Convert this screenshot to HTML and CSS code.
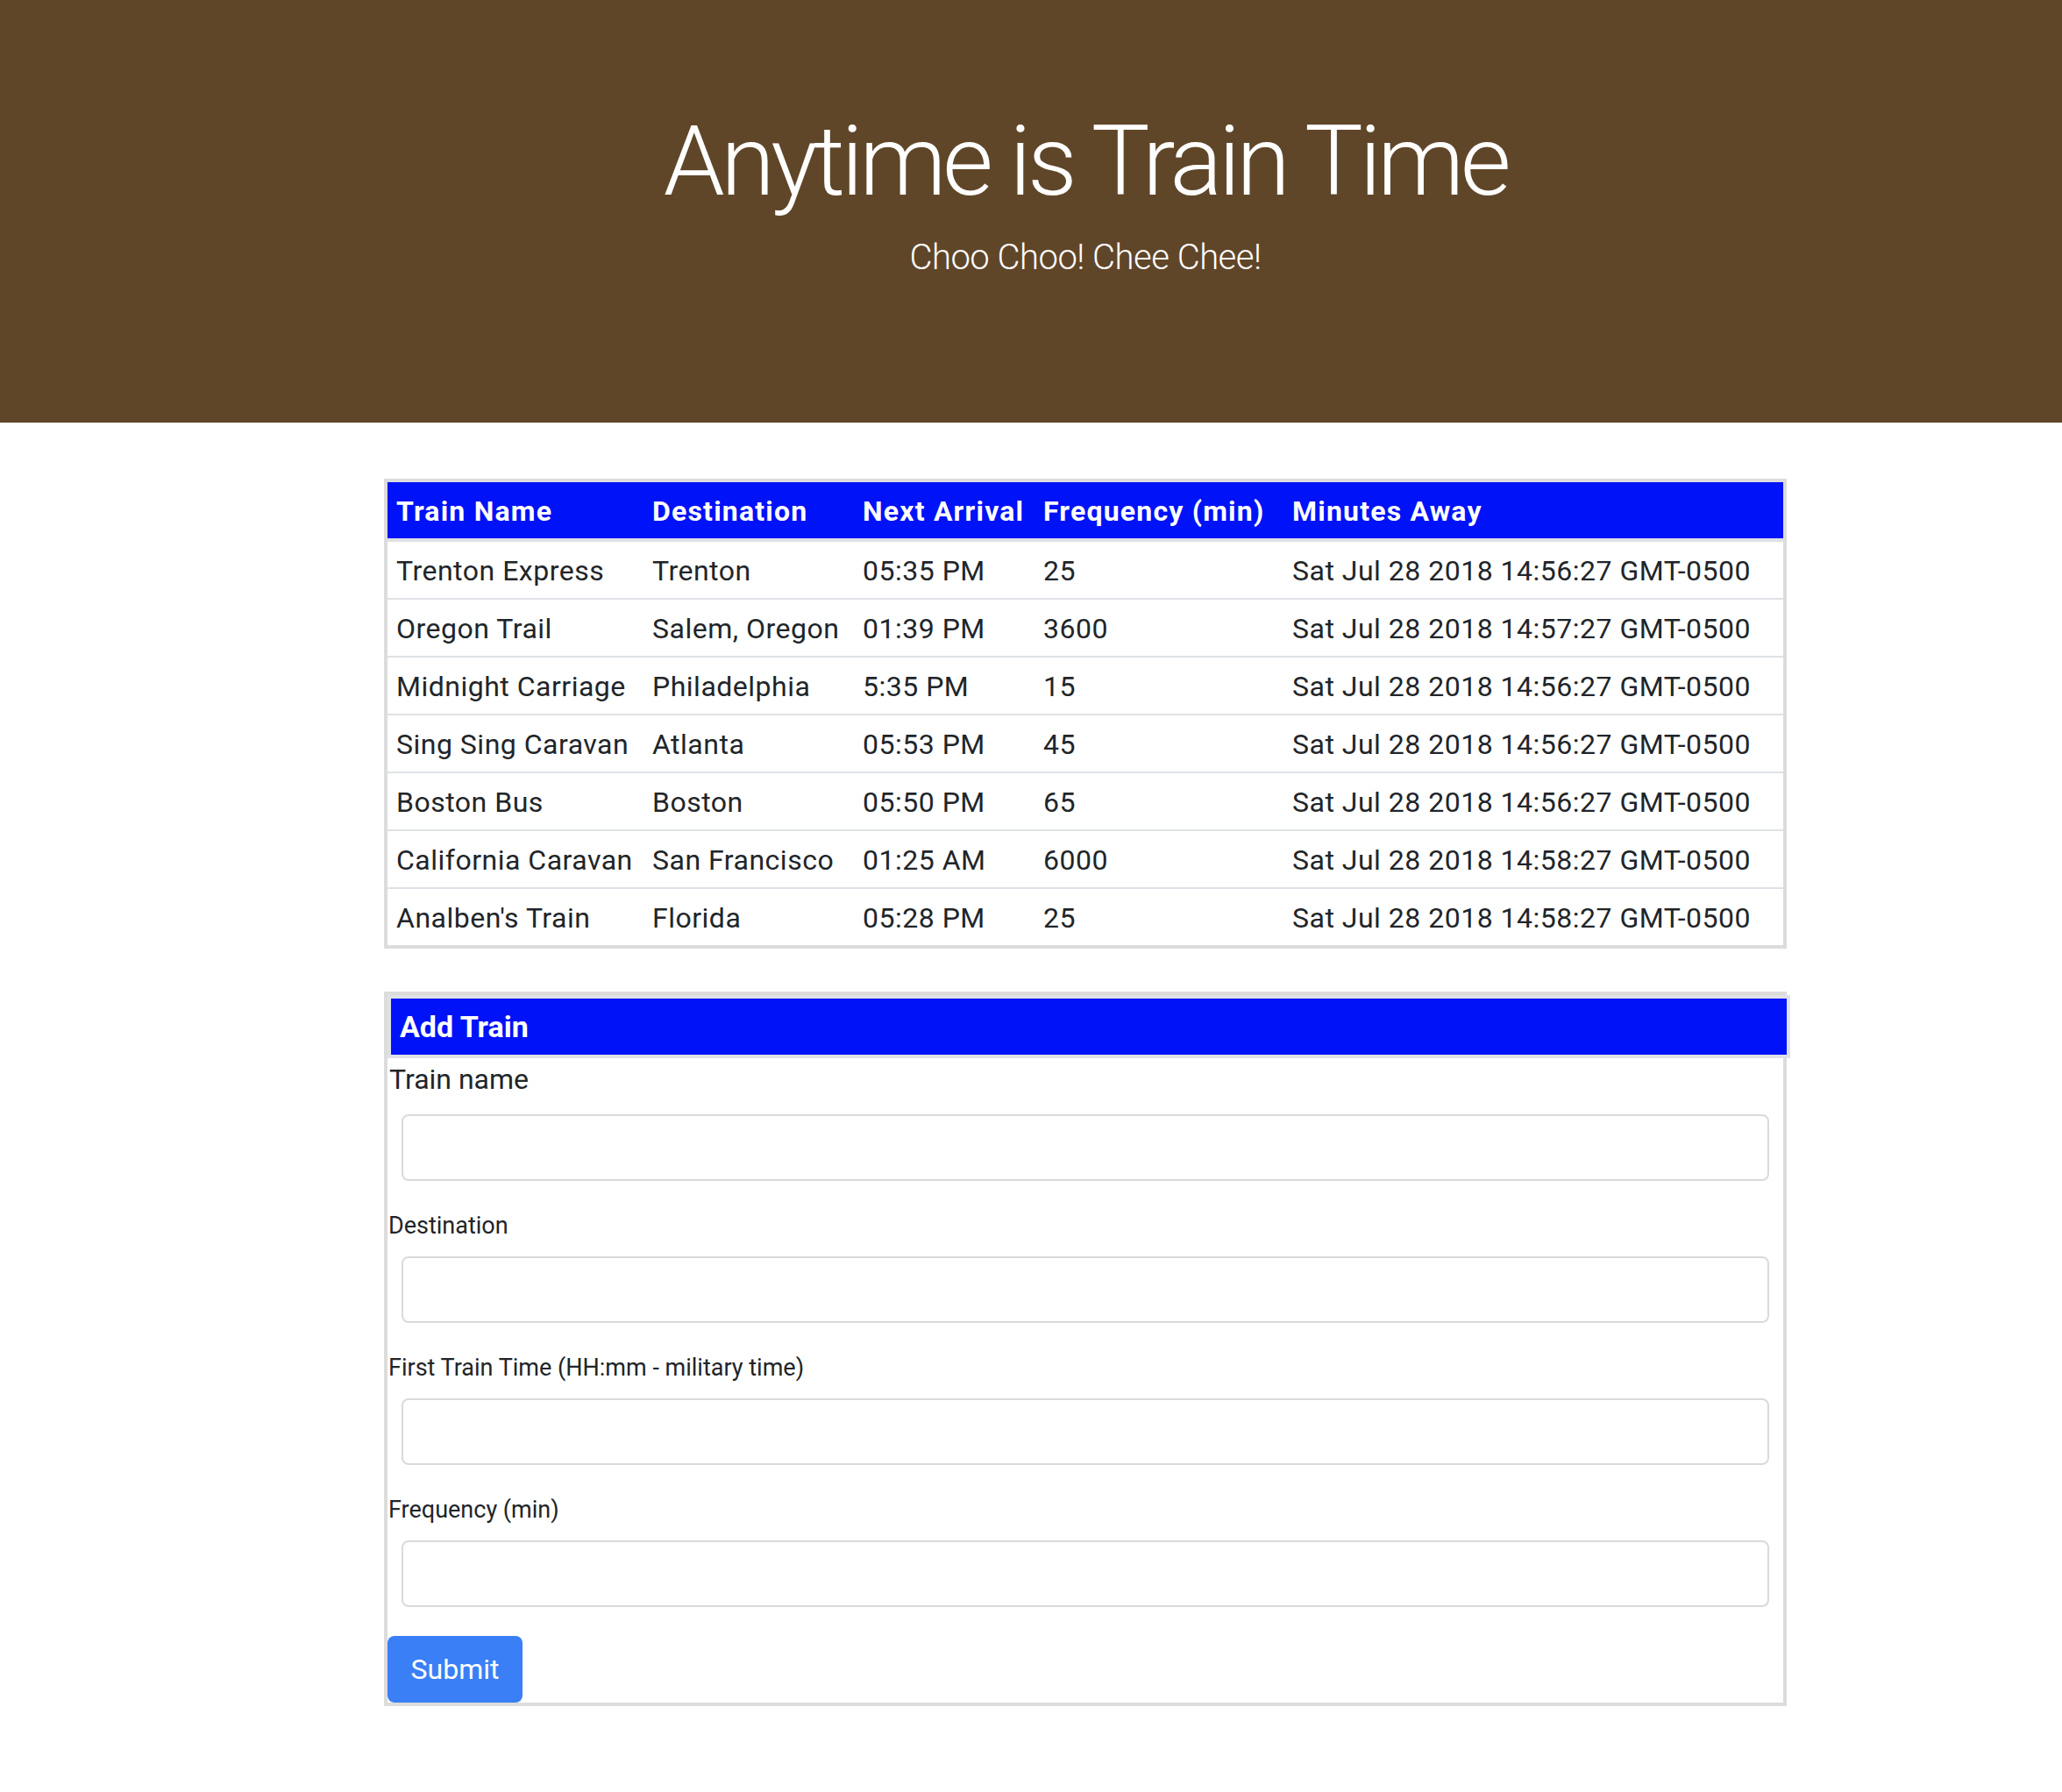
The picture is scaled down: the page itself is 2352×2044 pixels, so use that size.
FILE: index.html
```html
<!DOCTYPE html>
<html lang="en">
<head>
<meta charset="utf-8">
<title>Anytime is Train Time</title>
<link rel="stylesheet" href="styles.css">
</head>
<body>
<header class="hero">
  <h1 class="hero-title">Anytime is Train Time</h1>
  <p class="hero-lead">Choo Choo! Chee Chee!</p>
</header>
<main class="main">
  <div class="content">
    <div class="table-box">
      <table class="trains">
        <colgroup>
          <col class="c1"><col class="c2"><col class="c3"><col class="c4"><col class="c5">
        </colgroup>
        <thead>
          <tr><th>Train Name</th><th>Destination</th><th>Next Arrival</th><th>Frequency (min)</th><th>Minutes Away</th></tr>
        </thead>
        <tbody>
          <tr><td>Trenton Express</td><td>Trenton</td><td>05:35 PM</td><td>25</td><td>Sat Jul 28 2018 14:56:27 GMT-0500</td></tr>
          <tr><td>Oregon Trail</td><td>Salem, Oregon</td><td>01:39 PM</td><td>3600</td><td>Sat Jul 28 2018 14:57:27 GMT-0500</td></tr>
          <tr><td>Midnight Carriage</td><td>Philadelphia</td><td>5:35 PM</td><td>15</td><td>Sat Jul 28 2018 14:56:27 GMT-0500</td></tr>
          <tr><td>Sing Sing Caravan</td><td>Atlanta</td><td>05:53 PM</td><td>45</td><td>Sat Jul 28 2018 14:56:27 GMT-0500</td></tr>
          <tr><td>Boston Bus</td><td>Boston</td><td>05:50 PM</td><td>65</td><td>Sat Jul 28 2018 14:56:27 GMT-0500</td></tr>
          <tr><td>California Caravan</td><td>San Francisco</td><td>01:25 AM</td><td>6000</td><td>Sat Jul 28 2018 14:58:27 GMT-0500</td></tr>
          <tr><td>Analben's Train</td><td>Florida</td><td>05:28 PM</td><td>25</td><td>Sat Jul 28 2018 14:58:27 GMT-0500</td></tr>
        </tbody>
      </table>
    </div>

    <section class="card">
      <div class="card-header"><h2 class="card-title">Add Train</h2></div>
      <form class="card-form">
        <div class="group">
          <label class="label label-lg" for="name">Train name</label>
          <input class="field" id="name" type="text">
        </div>
        <div class="group">
          <label class="label" for="dest">Destination</label>
          <input class="field" id="dest" type="text">
        </div>
        <div class="group">
          <label class="label" for="first">First Train Time (HH:mm - military time)</label>
          <input class="field" id="first" type="text">
        </div>
        <div class="group group-last">
          <label class="label" for="freq">Frequency (min)</label>
          <input class="field" id="freq" type="text">
        </div>
        <button class="submit" type="button">Submit</button>
      </form>
    </section>
  </div>
</main>
</body>
</html>
```

FILE: styles.css
```css
html, body {
  margin: 0;
  padding: 0;
  background: #ffffff;
}

body {
  font-family: Roboto, "Liberation Sans", Arial, sans-serif;
  font-size: 32px;
  color: #212529;
}

.hero {
  background: #604629;
  height: 482px;
  box-sizing: border-box;
  padding: 117px 0 0 124px;
  text-align: center;
  color: #ffffff;
}

.hero-title {
  margin: 0 0 13px;
  font-size: 112px;
  line-height: 134px;
  font-weight: 300;
  letter-spacing: -4.5px;
}

.hero-lead {
  margin: 0;
  font-size: 40px;
  line-height: 60px;
  font-weight: 300;
  letter-spacing: -0.5px;
}

.main {
  padding: 64px 0 100px 124px;
}

.content {
  width: 1600px;
  margin: 0 auto;
}

.table-box {
  border: 4px solid #dcdcdc;
}

.trains {
  width: 100%;
  border-collapse: collapse;
  table-layout: fixed;
}

.c1 { width: 292px; }
.c2 { width: 240px; }
.c3 { width: 206px; }
.c4 { width: 284px; }

.trains th,
.trains td {
  padding: 11px 10px 9px;
  line-height: 44px;
  text-align: left;
  white-space: nowrap;
  overflow: hidden;
}

.trains th {
  background: #0012f8;
  color: #ffffff;
  font-weight: 700;
  letter-spacing: 1.2px;
  border-bottom: 4px solid #dee2e6;
}

.trains td {
  letter-spacing: 0.5px;
  border-top: 2px solid #dee2e6;
}

.trains tbody tr:first-child td {
  border-top: 0;
}

.card {
  margin-top: 49px;
  border: 4px solid #dcdcdc;
}

.card-header {
  width: calc(100% + 8px);
  box-sizing: border-box;
  border: 4px solid #dee2e6;
  background: #0012f8;
  padding: 10px 10px;
}

.card-title {
  margin: 0;
  color: #ffffff;
  font-size: 34px;
  line-height: 44px;
  font-weight: 700;
}

.card-form {
  margin: 0;
}

.group {
  margin-bottom: 32px;
}

.group-last {
  margin-bottom: 33px;
}

.label {
  display: block;
  font-size: 27px;
  line-height: 38px;
  margin: 0 0 16px 1px;
}

.label-lg {
  font-size: 32px;
  line-height: 48px;
  margin-left: 2px;
}

.field {
  display: block;
  box-sizing: border-box;
  width: calc(100% - 32px);
  height: 76px;
  margin: 0 16px;
  border: 2px solid #dadada;
  border-radius: 8px;
  background: #ffffff;
  font: inherit;
  padding: 0 20px;
}

.submit {
  display: block;
  margin: 0;
  width: 154px;
  height: 76px;
  border: 0;
  border-radius: 8px;
  background: #3a7ff6;
  color: #ffffff;
  font-family: Roboto, "Liberation Sans", Arial, sans-serif;
  font-size: 32px;
  line-height: 48px;
  padding: 0;
}
```
